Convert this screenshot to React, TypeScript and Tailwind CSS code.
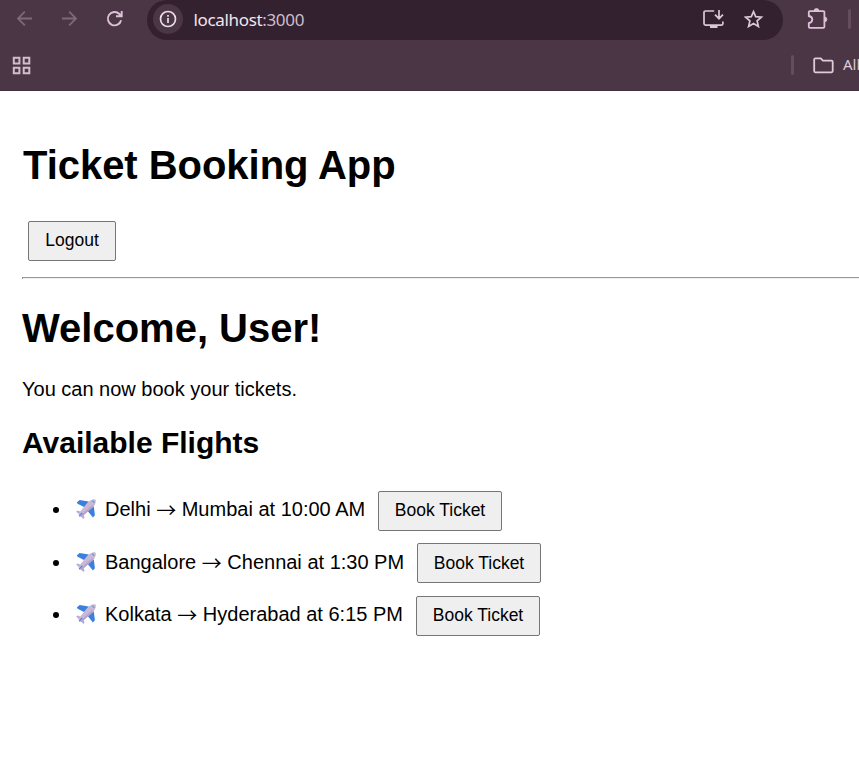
import type { ReactNode } from "react";

const flights = [
  { from: "Delhi", to: "Mumbai", time: "10:00 AM", row: "h-[52px]", text: "w-[273px] mt-[7px]", bullet: "mt-[16px]", label: "pb-[3px]" },
  { from: "Bangalore", to: "Chennai", time: "1:30 PM", row: "h-[53px]", text: "w-[312px] mt-[8px]", bullet: "mt-[17px]", label: "pb-px" },
  { from: "Kolkata", to: "Hyderabad", time: "6:15 PM", row: "h-[52px]", text: "w-[311px] mt-[7px]", bullet: "mt-[16px]", label: "pb-[3px]" },
];

function Button({ children, className }: { children: ReactNode; className: string }) {
  return (
    <button
      className={`h-10 shrink-0 rounded-[2px] border border-[#767676] bg-[#efefef] text-[17.5px] leading-5 whitespace-nowrap ${className}`}
    >
      {children}
    </button>
  );
}

function Plane() {
  return (
    <svg viewBox="0 0 20 20" className="mt-px h-5 w-5 shrink-0" aria-label="airplane">
      <path d="M.8 3.4 3.6.9l9.2 1.6L9 8.4 1.6 4.8zM17.8 7.2l1.1 9-2 2.2-5.6-7z" fill="#3b80dc" />
      <path d="M.2 12.4 1.6 11.6l4.3 1.6 1.4 1.6 1.2 4-1.2 1.2-3.6-4z" fill="#bda8db" />
      <path d="M3 17.4 2.6 14.6 11.4 3.7C13.4 1.2 18.1-.6 19.4.5c1.2 1.2-.2 5.4-2.3 7.4L5.6 18z" fill="#c9b9d7" />
      <path d="m4.3 17 8-7.6 5.3-4.1-1.2 3.2L5.6 18z" fill="#b7a3c8" />
      <path d="m2.8 16.8 3.1-3.4.8.8-3.3 3.3z" fill="#3b80dc" />
      <path d="m16.6 1.3 2.2 2.1-.5.9-2.6-2.4z" fill="#4b9bdd" />
    </svg>
  );
}

function Toolbar() {
  return (
    <div className="flex h-10 items-start">
      <svg className="ml-[16px] mt-[10px] h-[18px] w-[18px] shrink-0" viewBox="0 0 18 18" fill="none" stroke="#7d6978" strokeWidth="1.8">
        <path d="M16 8.5H2M8.8 1.7 2 8.5l6.8 6.8" />
      </svg>
      <svg className="ml-[27px] mt-[10px] h-[18px] w-[18px] shrink-0" viewBox="0 0 18 18" fill="none" stroke="#7d6978" strokeWidth="1.8">
        <path d="M1 8.5h14M8.2 1.7 15 8.5l-6.8 6.8" />
      </svg>
      <svg className="ml-[27px] mt-[10px] h-[18px] w-[18px] shrink-0" viewBox="0 0 18 18" fill="none" stroke="#dfc0d9" strokeWidth="1.9">
        <path d="M15.1 10.2A6.7 6.7 0 1 1 13.4 4l2 2.1M15.7 1v5.3H10" />
      </svg>
      <div className="ml-[23px] flex h-10 w-[636px] shrink-0 items-start rounded-[20px] bg-[#33212f]">
        <div className="ml-[6px] mt-[4px] flex h-[30px] w-[30px] items-center justify-center rounded-full bg-[#4b3646]">
          <svg className="h-[18px] w-[18px]" viewBox="0 0 18 18" fill="none" stroke="#eadce7" strokeWidth="1.7">
            <circle cx="9" cy="9" r="7.5" />
            <path d="M9 8v5M9 5v1.8" />
          </svg>
        </div>
        <span className="ml-[10.5px] mt-[8px] w-[480px] font-['Noto_Sans',sans-serif] text-[17px] leading-6 tracking-[-0.34px] text-[#f1e5ef]">
          localhost<span className="text-[#cebdca]">:3000</span>
        </span>
        <svg className="ml-[29px] mt-[10px] h-[19px] w-[21px] shrink-0" viewBox="0 0 21 19" fill="none" stroke="#dac8d5" strokeWidth="1.7">
          <path d="M11.2 1H2.6Q1 1 1 2.6v11q0 1.5 1.6 1.5h16q1.3 0 1.3-1.5v-2.1M16 0v8.7m-4-4 4 4 4-4" />
          <path d="M7 15.5h7.5V18H7z" fill="#dac8d5" stroke="none" />
        </svg>
        <svg className="ml-[20px] mt-[9px] h-5 w-5 shrink-0" viewBox="0 0 20 20" fill="none" stroke="#dac8d5" strokeWidth="1.7">
          <path d="m9.5 2.6 2.2 5.1 5.7.5-4.3 3.7 1.3 5.5-4.9-2.9-4.9 2.9 1.3-5.5-4.3-3.7 5.7-.5z" />
        </svg>
      </div>
      <svg className="ml-[23px] mt-[8px] h-[22px] w-[22px] shrink-0" viewBox="0 0 22 22" fill="none" stroke="#dfc0d9" strokeWidth="1.8">
        <path d="M3.8 3.1h13.6q1 0 1 1v14.7q0 1-1 1H3.8q-1 0-1-1v-3.6q3.5-.9 3.5-3.7T2.8 8V4.1q0-1 1-1Z" />
        <path d="M8 3a2.5 2.5 0 0 1 5 0M18.5 9a2.3 2.3 0 0 1 0 4.8" fill="#dfc0d9" stroke="#dfc0d9" strokeWidth=".8" />
      </svg>
      <span className="ml-[20px] mt-[9px] h-5 w-[3px] shrink-0 rounded bg-[#654c5e]" />
    </div>
  );
}

function Bookmarks() {
  return (
    <div className="flex h-[50px] items-start overflow-hidden">
      <svg className="ml-[12px] mt-[16px] h-[19px] w-[19px] shrink-0" viewBox="0 0 19 19" fill="none" stroke="#d3bdca" strokeWidth="2">
        <path d="M1.8 1.8h5.6v5.6H1.8zM11.7 1.8h5.6v5.6h-5.6zM1.8 11.7h5.6v5.6H1.8zM11.7 11.7h5.6v5.6h-5.6z" />
      </svg>
      <span className="ml-[760px] mt-[15px] h-5 w-[3px] shrink-0 rounded bg-[#654c5e]" />
      <svg className="ml-[19px] mt-[17px] h-[17px] w-[21px] shrink-0" viewBox="0 0 21 17" fill="none" stroke="#dfccd9" strokeWidth="1.8">
        <path d="M2.3 1.3h5.4L10 3.7h8.5q1.2 0 1.2 1.2v9.2q0 1.2-1.2 1.2H2.3q-1.1 0-1.1-1.2V2.4q0-1.1 1.1-1.1Z" />
      </svg>
      <span className="ml-[9px] mt-[14px] font-['Noto_Sans',sans-serif] text-[15px] leading-5 text-[#dfccd9] whitespace-nowrap">All</span>
    </div>
  );
}

export default function App() {
  return (
    <div className="h-[782px] w-full overflow-hidden bg-white font-['Liberation_Sans',Arial,sans-serif] text-xl text-black">
      <header className="h-[91px] overflow-hidden border-b border-[#44313f] bg-[#4b3646]">
        <Toolbar />
        <Bookmarks />
      </header>
      <main className="pl-[22px]">
        <h1 className="pl-px pt-[51px] text-[40px] font-bold leading-[46px] tracking-[-0.04px]">Ticket Booking App</h1>
        <Button className="ml-[6px] mt-[33px] block w-[88px] pb-[3px]">Logout</Button>
        <hr className="mt-4 h-[2px] border-l border-t border-[#9a9a9a] bg-[#eeeeee]" />
        <h1 className="mt-[26px] text-[40px] font-bold leading-[46px]">Welcome, User!</h1>
        <p className="mt-[27px] leading-[23px]">You can now book your tickets.</p>
        <h2 className="mt-[25px] text-[30px] font-bold leading-[34px]">Available Flights</h2>
        <ul className="mt-[31px]">
          {flights.map((flight) => (
            <li key={flight.from} className={`flex items-start ${flight.row}`}>
              <span className={`ml-[31px] h-[6px] w-[6px] shrink-0 rounded-full bg-black ${flight.bullet}`} />
              <div className={`ml-[17px] flex shrink-0 ${flight.text}`}>
                <Plane />
                <span className="ml-[9px] leading-[23px] whitespace-nowrap">
                  {flight.from}{" "}
                  <span className="font-['Noto_Sans_CJK_JP',sans-serif] leading-[0] align-[-2px]">→</span>{" "}
                  {flight.to} at {flight.time}
                </span>
              </div>
              <Button className={`ml-[29px] w-[124px] ${flight.label}`}>Book Ticket</Button>
            </li>
          ))}
        </ul>
      </main>
    </div>
  );
}
